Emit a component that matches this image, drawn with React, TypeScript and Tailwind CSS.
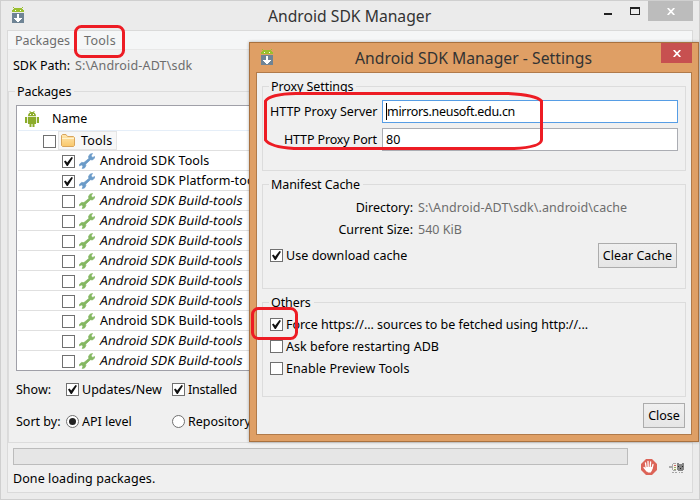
import type { ReactNode } from "react";

const FONT = "font-['Noto_Sans','Open_Sans',sans-serif]";

function SdkIcon() {
  return (
    <svg width="12" height="16" viewBox="0 0 12 16" shapeRendering="crispEdges" className="block shrink-0">
      <path d="M1 0h1v1h8V0h1v1h-1v1h1v1h1v2H0V3h1V2h1V1H1z" fill="#9abf2f" />
      <path d="M3 3h1v1H3zM8 3h1v1H8z" fill="#fff" />
      <path d="M0 6h12v10H0z" fill="#6f8495" />
      <path d="M5 7h2v4h3v1H9v1H8v1H7v1H5v-1H4v-1H3v-1H2v-1h3z" fill="#fff" />
    </svg>
  );
}

function AndroidIcon() {
  return (
    <svg width="14" height="16" viewBox="0 0 14 16" className="block shrink-0" fill="#8cac2b">
      <path d="M3 5c0-2 1.3-3.2 2.4-3.7L4 0h1l1 1h2l1-1h1L8.600 1.300C9.800 2 11 3.200 11 5z" />
      <path d="M3 5.700h8V13h-1.500v3h-2v-3h-1v3h-2v-3H3zM0 6h2.200v6H0zM11.800 6H14v6h-2.200z" />
      <path d="M5 3h1v1H5zM8 3h1v1H8z" fill="#fff" />
    </svg>
  );
}

function Wrench({ blue }: { blue?: boolean }) {
  return (
    <svg
      width="16"
      height="16"
      viewBox="0 0 16 16"
      className={blue ? "block shrink-0 text-[#6b9bc8]" : "block shrink-0 text-[#84b762]"}
      fill="currentColor"
      stroke="currentColor"
      strokeWidth="0.700"
    >
      <path d="M13.500 0.500L11 1.200L9.500 3.500L9.900 5.400L4.900 9.600L2.500 9.400L0.500 11.300L0.300 12.800L2.500 12L4 13.300L3.200 15.500L5.500 15L6.900 12.700L6.600 11.200L11.500 6.700L13.500 7L15.500 5L15.700 3.500L13.800 4.400L12 3z" />
    </svg>
  );
}

function Folder() {
  return (
    <svg width="14" height="13" viewBox="0 0 14 13" className="block shrink-0">
      <defs>
        <linearGradient id="folder" x1="0" y1="0" x2="0" y2="1">
          <stop offset="0" stopColor="#ffe7b0" />
          <stop offset="1" stopColor="#f9c76b" />
        </linearGradient>
      </defs>
      <path d="M.5 11.500v-10l1-1H5l1.500 2h6l1 1v8l-1 1h-11z" fill="url(#folder)" stroke="#d9a55c" />
      <path d="M1 4.500h12" stroke="#fff3cf" />
    </svg>
  );
}

function Check({ on }: { on?: boolean }) {
  return (
    <span className="flex size-[13px] shrink-0 items-center justify-center border border-[#707070] bg-white">
      {on && (
        <svg width="9" height="9" viewBox="0 0 9 9">
          <path d="M0 4.500L1.500 3.500L3.200 5.400L7.500 0L9 .7L3.800 9H2.800z" fill="#111" />
        </svg>
      )}
    </span>
  );
}

function Radio({ on }: { on?: boolean }) {
  return (
    <span className="flex size-[13px] shrink-0 items-center justify-center rounded-full border border-[#707070] bg-white">
      {on && <span className="size-[7px] rounded-full bg-[#222]" />}
    </span>
  );
}

function CloseGlyph() {
  return (
    <svg width="8" height="7" viewBox="0 0 8 7" className="block">
      <path d="M.7 0L7.300 7M7.300 0L.7 7" stroke="#fff" strokeWidth="1.700" />
    </svg>
  );
}

function Group({ title, className, children }: { title: string; className: string; children: ReactNode }) {
  return (
    <section className={`relative border border-[#dcdcdc] ${className}`}>
      <h2 className="absolute -top-[10px] left-[6px] h-5 bg-[#f0f0f0] pr-[3px] pl-[2px] leading-5 tracking-[-0.08px]">{title}</h2>
      {children}
    </section>
  );
}

const rows = [
  { name: "Android SDK Tools", on: true },
  { name: "Android SDK Platform-tools", on: true },
  { name: "Android SDK Build-tools", italic: true },
  { name: "Android SDK Build-tools", italic: true },
  { name: "Android SDK Build-tools", italic: true },
  { name: "Android SDK Build-tools", italic: true },
  { name: "Android SDK Build-tools", italic: true },
  { name: "Android SDK Build-tools", italic: true },
  { name: "Android SDK Build-tools" },
  { name: "Android SDK Build-tools", italic: true },
  { name: "Android SDK Build-tools", italic: true },
];

function MainWindow() {
  return (
    <div className="flex h-[500px] w-[700px] flex-col border border-[#cfcfcf] bg-[#ebebeb] px-[6px]">
      <header className="flex h-[29px] shrink-0">
        <div className="w-[261px] pt-[6px] pl-[5px]"><SdkIcon /></div>
        <h1 className="w-[339px] pt-[5px] text-[15.7px] leading-5 text-[#333]">Android SDK Manager</h1>
        <div className="flex w-[41px] pt-[12px]">
          <span className="-ml-[3px] h-[2px] w-2 bg-[#222]" />
        </div>
        <span className="mt-[6px] -ml-[18px] h-2 w-[10px] border border-t-2 border-[#222]" />
        <span className="ml-[8px] flex h-5 w-[45px] items-center justify-center bg-[#bcbcbc]"><CloseGlyph /></span>
      </header>
      <main className="flex h-[463px] flex-col border border-[#dadada] bg-[#f0f0f0]">
        <nav className="flex h-[19px] shrink-0 border-b border-[#e8e8e8] bg-[#f5f6f7] pl-[7px] leading-5 text-[#6d6d6d]">
          <span className="w-[69px]">Packages</span>
          <span className="tracking-[0.3px]">Tools</span>
        </nav>
        <div className="flex h-[41px] pt-[6px] pl-[5px] leading-5">
          <span className="w-[62px]">SDK Path:</span>
          <span className="tracking-[0.17px] text-[#6d6d6d]">S:\Android-ADT\sdk</span>
        </div>
        <Group title="Packages" className="flex h-[352px] shrink-0 flex-col pt-[13px] pl-[7px]">
          <div className="h-[266px] shrink-0 border border-[#a0a0a8] bg-white pl-px">
            <div className="flex h-[25px] items-center border-b border-[#e5eef8] pt-[2px] pl-[7px]">
              <AndroidIcon />
              <span className="ml-[13px]">Name</span>
            </div>
            <div className="flex h-5 items-center border-b border-[#e0e0e0] pl-[25px]">
              <span className="pt-[2px]"><Check /></span>
              <span className="ml-[2px] flex h-[19px] w-[59px] items-center border border-[#e5e5e5] bg-[#f7f7f7] pl-[2px]">
                <Folder />
                <span className="ml-[6px] pt-px tracking-[0.2px]">Tools</span>
              </span>
            </div>
            {rows.map((r, i) => (
              <div key={i} className="flex h-5 items-center border-b border-[#e0e0e0] pl-[44px] whitespace-nowrap last:h-[19px] last:border-b-0">
                <span className="pt-px"><Check on={r.on} /></span>
                <span className="ml-1"><Wrench blue={r.on} /></span>
                <span className={r.italic ? "ml-[5px] inline-block -skew-x-12 tracking-[0.12px]" : "ml-[5px] tracking-[0.12px]"}>{r.name}</span>
              </div>
            ))}
          </div>
          <div className="mt-[9px] flex h-[19px] items-center">
            <span className="w-[50px]">Show:</span>
            <Check on /><span className="ml-[3px] w-[90px]">Updates/New</span>
            <Check on /><span className="ml-[3px] tracking-[-0.2px]">Installed</span>
          </div>
          <div className="mt-[13px] flex h-[19px] items-center">
            <span className="w-[50px]">Sort by:</span>
            <Radio on /><span className="ml-[3px] w-[90px]">API level</span>
            <Radio /><span className="ml-[3px]">Repository</span>
          </div>
        </Group>
        <footer className="flex pl-[5px]">
          <div className="w-[615px] pt-[5px]">
            <div className="h-[17px] border border-[#bcbcbc] bg-[#e6e6e6]" />
            <p className="mt-[4px] leading-5 tracking-[0.08px]">Done loading packages.</p>
          </div>
          <div className="flex gap-[12px] pt-[16px] pl-[13px]">
            <svg width="16" height="16" viewBox="0 0 16 16">
              <path d="M5 0h6l5 5v6l-5 5H5l-5-5V5z" fill="#dc6458" />
              <path d="M5.200 9L4.500 4M7.200 8L7 2.500M9.200 8L9.600 3M11 9.500L12 5.500M3 8.500l3 3.500" stroke="#fff" strokeWidth="1.300" strokeLinecap="round" />
              <path d="M4.700 8h6.500v3l-1.500 2.500H7L4.700 11z" fill="#fff" />
            </svg>
            <svg width="15" height="10" viewBox="0 0 15 10" shapeRendering="crispEdges" className="mt-1">
              <path d="M0 3h3v2H0z" fill="#aaa" />
              <path d="M4 1h4v6H4z" fill="#f7f3ea" />
              <path d="M3 1h1v6H3zM4 0h3v1H4zM4 7h3v1H4z" fill="#aaa" />
              <path d="M3 9h2v1H3zM6 9h2v1H6zM10 9h1v1h-1zM12 9h2v1h-2z" fill="#a5a5a5" />
              <path d="M5 2h2v1H5z" fill="#c66" />
              <path d="M5 4h2v1H5zM5 6h2v1H5z" fill="#9a6" />
              <path d="M8 0h2v1h3V0h2v7h-1v1H9V7H8z" fill="#858585" />
              <path d="M9 3h1v1H9zM13 3h1v1h-1zM11 5h1v1h-1z" fill="#222" />
            </svg>
          </div>
        </footer>
      </main>
    </div>
  );
}

function Dialog() {
  return (
    <div className="absolute top-[42px] left-[249px] flex h-[400px] w-[450px] flex-col border border-[#a8713f] bg-[#df9f65] px-[6px] pb-[6px] shadow-[0_0_3px_rgba(0,0,0,0.3)]">
      <header className="flex h-[29px] shrink-0">
        <div className="w-[99px] pt-[6px] pl-[5px]"><SdkIcon /></div>
        <h1 className="w-[276px] pt-[5px] text-[15.7px] leading-5 tracking-[0.03px] text-[#333]">Android SDK Manager - Settings</h1>
        <span className="ml-[30px] flex h-5 w-[31px] shrink-0 items-center justify-center bg-[#c75050]"><CloseGlyph /></span>
      </header>
      <div className="flex flex-1 flex-col border border-[#b07a4a] bg-[#f0f0f0] px-[5px] pt-[13px]">
        <Group title="Proxy Settings" className="h-[85px] pt-[13px] pl-[7px]">
          <div className="flex h-[23px] items-center">
            <span className="w-[107px] text-right tracking-[-0.03px]">HTTP Proxy Server</span>
            <span className="ml-[5px] flex h-[23px] w-[296px] items-center border border-[#569de5] bg-white pl-[3px] tracking-[-0.31px]"><i className="h-[17px] w-px bg-black" />mirrors.neusoft.edu.cn</span>
          </div>
          <div className="mt-[5px] flex h-[23px] items-center">
            <span className="w-[107px] text-right tracking-[-0.13px]">HTTP Proxy Port</span>
            <span className="ml-[5px] flex h-[23px] w-[296px] items-center border border-[#abadb3] bg-white pl-[3px]">80</span>
          </div>
        </Group>
        <Group title="Manifest Cache" className="mt-[13px] h-[105px] pt-[12px] pl-[7px]">
          <div className="flex h-[22px] items-center"><span className="w-[143px] text-right">Directory:</span><span className="ml-[5px] tracking-[0.08px] text-[#6d6d6d]">S:\Android-ADT\sdk\.android\cache</span></div>
          <div className="flex h-[22px] items-center"><span className="w-[143px] text-right">Current Size:</span><span className="ml-[5px] text-[#6d6d6d]">540 KiB</span></div>
          <div className="mt-[2px] flex h-[25px] items-center">
            <Check on /><span className="ml-[3px] w-[312px] tracking-[0.05px]">Use download cache</span>
            <button className="h-[25px] w-[79px] border border-[#acacac] bg-linear-to-b from-[#f0f0f0] to-[#e5e5e5]">Clear Cache</button>
          </div>
        </Group>
        <Group title="Others" className="mt-[13px] h-[95px] pt-[11px] pl-[7px]">
          <div className="mb-px flex h-[21px] items-center gap-[3px] tracking-[-0.03px]"><Check on />Force https://... sources to be fetched using http://...</div>
          <div className="mb-px flex h-[21px] items-center gap-[3px] tracking-[0.04px]"><Check />Ask before restarting ADB</div>
          <div className="flex h-[21px] items-center gap-[3px] tracking-[0.07px]"><Check />Enable Preview Tools</div>
        </Group>
        <button className="mt-[6px] mr-px h-[25px] w-[42px] self-end border border-[#acacac] bg-linear-to-b from-[#f0f0f0] to-[#e5e5e5]">Close</button>
      </div>
    </div>
  );
}

export default function App() {
  return (
    <div className={`relative h-[500px] w-[700px] overflow-hidden text-[12.5px] leading-5 whitespace-nowrap text-black ${FONT}`}>
      <MainWindow />
      <Dialog />
      <svg width="700" height="500" className="pointer-events-none absolute inset-0" fill="none" stroke="#ed1c24" strokeWidth="3">
        <rect x="75.500" y="26.500" width="48" height="30" rx="6" />
        <path d="M296 93.500H508Q536 95 541.500 101V140Q541 147 514 148.500H294Q270 147 265.500 140V101Q270 94 296 93.500z" />
        <rect x="252.500" y="308.500" width="44" height="30" rx="6" />
      </svg>
    </div>
  );
}
